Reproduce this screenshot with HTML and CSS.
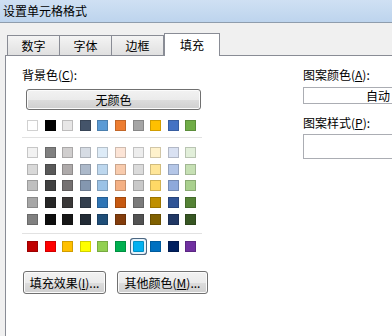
FILE: index.html
```html
<!DOCTYPE html>
<html lang="zh-CN">
<head>
  <meta charset="UTF-8" />
  <title>设置单元格格式</title>
  <link rel="stylesheet" href="styles.css">
</head>
<body>

<div class="window">
  <div class="titlebar">设置单元格格式</div>
  <div class="dialog">
    <div class="tabs">
      <div class="tab">数字</div>
      <div class="tab">字体</div>
      <div class="tab">边框</div>
      <div class="tab active">填充</div>
    </div>
    <div class="page">
      <div class="col-left">
        <div class="label">背景色(<u>C</u>):</div>
        <button class="btn no-color">无颜色</button>
        <div id="theme-row" class="swatches"></div>
        <div class="sep"></div>
        <div id="tint-grid" class="swatches"></div>
        <div class="sep"></div>
        <div id="std-row" class="swatches"></div>
        <div class="btn-row">
          <button class="btn fill-effect">填充效果(<u>I</u>)...</button>
          <button class="btn more-colors">其他颜色(<u>M</u>)...</button>
        </div>
      </div>
      <div class="col-right">
        <div class="label">图案颜色(<u>A</u>):</div>
        <div class="combo">自动</div>
        <div class="label label-2">图案样式(<u>P</u>):</div>
        <div class="combo tall"></div>
      </div>
    </div>
  </div>
</div>

<script>
  // 主题颜色
  const theme = ['#ffffff','#000000','#e7e6e6','#44546a','#5b9bd5','#ed7d31','#a5a5a5','#ffc000','#4472c4','#70ad47'];
  const tints = [
    ['#f2f2f2','#808080','#d0cece','#d6dce4','#ddebf7','#fce4d6','#ededed','#fff2cc','#d9e1f2','#e2efda'],
    ['#d9d9d9','#595959','#aeaaaa','#acb9ca','#bdd7ee','#f8cbad','#dbdbdb','#ffe699','#b4c6e7','#c6e0b4'],
    ['#bfbfbf','#404040','#757171','#8497b0','#9bc2e6','#f4b084','#c9c9c9','#ffd966','#8ea9db','#a9d08e'],
    ['#a6a6a6','#262626','#3a3838','#333f4f','#2f75b5','#c65911','#7b7b7b','#bf8f00','#305496','#548235'],
    ['#808080','#0d0d0d','#161616','#222b35','#1f4e78','#833c0c','#525252','#806000','#203764','#375623']
  ];
  // 标准色
  const standard = ['#c00000','#ff0000','#ffc000','#ffff00','#92d050','#00b050','#00b0f0','#0070c0','#002060','#7030a0'];

  function fill(id, colors, selected) {
    const box = document.getElementById(id);
    colors.forEach(function(c, i) {
      const s = document.createElement('span');
      s.className = 'swatch' + (i === selected ? ' selected' : '');
      s.style.background = c;
      box.appendChild(s);
    });
  }
  fill('theme-row', theme, -1);
  fill('tint-grid', tints.flat(), -1);
  fill('std-row', standard, 6);
</script>

</body>
</html>
```

FILE: styles.css
```css
* {
  margin: 0; padding: 0; box-sizing: border-box;
  font-family: 'Noto Sans CJK SC', 'Microsoft YaHei', sans-serif;
}
body {
  width: 392px;
  height: 336px;
  overflow: hidden;
  background: #f0f0f0;
  font-size: 12px;
  color: #000;
}
.window {
  display: flex;
  flex-direction: column;
  height: 336px;
}
.titlebar {
  height: 23px;
  line-height: 22px;
  padding-left: 3px;
  background: linear-gradient(to bottom, #cfe0f3, #bdd4ed);
  border-bottom: 1px solid #8f9dad;
}
.dialog {
  flex: 1;
  display: flex;
  flex-direction: column;
  padding-top: 10px;
  padding-left: 5px;
}
.tabs {
  display: flex;
  align-items: flex-end;
  height: 23px;
  margin-bottom: -1px;
  padding-left: 2px;
}
.tab {
  width: 53px;
  height: 21px;
  line-height: 19px;
  text-align: center;
  margin-left: -1px;
  border: 1px solid #898c95;
  border-bottom: none;
  background: linear-gradient(to bottom, #f4f4f4, #dfdfdf);
}
.tab:first-child {
  margin-left: 0;
}
.tab.active {
  position: relative;
  z-index: 1;
  width: 56px;
  height: 23px;
  line-height: 21px;
  margin-left: 0;
  background: #fff;
}
.page {
  flex: 1;
  display: flex;
  padding: 11px 0 0 16px;
  background: #fff;
  border: 1px solid #898c95;
  border-right: none;
  border-bottom: none;
}
.col-left {
  width: 186px;
}
.col-right {
  margin-left: 95px;
  flex: 1;
}
.label {
  height: 16px;
  line-height: 16px;
  white-space: nowrap;
}
.btn {
  display: block;
  height: 23px;
  font-size: 12px;
  color: #000;
  border: 1px solid #707070;
  border-radius: 3px;
  background: linear-gradient(to bottom, #f2f2f2 0%, #ebebeb 50%, #dddddd 51%, #cfcfcf 100%);
  box-shadow: inset 0 0 0 1px #fbfbfb;
}
.no-color {
  width: 175px;
  height: 21px;
  margin: 6px 0 0 4px;
}
.swatches {
  display: grid;
  grid-template-columns: repeat(10, 11px);
  column-gap: 6.6px;
  row-gap: 5.67px;
  margin-left: 5px;
}
#theme-row {
  margin-top: 10px;
}
#tint-grid {
  margin-top: 9px;
}
#std-row {
  margin-top: 7.5px;
}
.swatch {
  width: 11px;
  height: 11px;
  border: 1px solid rgba(0,0,0,0.18);
}
.swatch.selected {
  border-radius: 1px;
  box-shadow: 0 0 0 2px #e6f2fa, 0 0 0 3px #4b6782;
}
.sep {
  width: 180px;
  height: 1px;
  margin-top: 6px;
  background: #e2e2e2;
}
#tint-grid + .sep {
  margin-top: 8px;
}
.btn-row {
  display: flex;
  gap: 11px;
  margin: 19px 0 0 1px;
}
.fill-effect {
  width: 83px;
}
.more-colors {
  width: 91px;
}
.combo {
  height: 17px;
  margin-top: 4px;
  padding-left: 62px;
  line-height: 15px;
  background: #fff;
  border: 1px solid #abadb3;
  border-right: none;
  white-space: nowrap;
  overflow: hidden;
}
.combo.tall {
  height: 25px;
  margin-top: 3px;
}
.label-2 {
  margin-top: 11px;
}
```
